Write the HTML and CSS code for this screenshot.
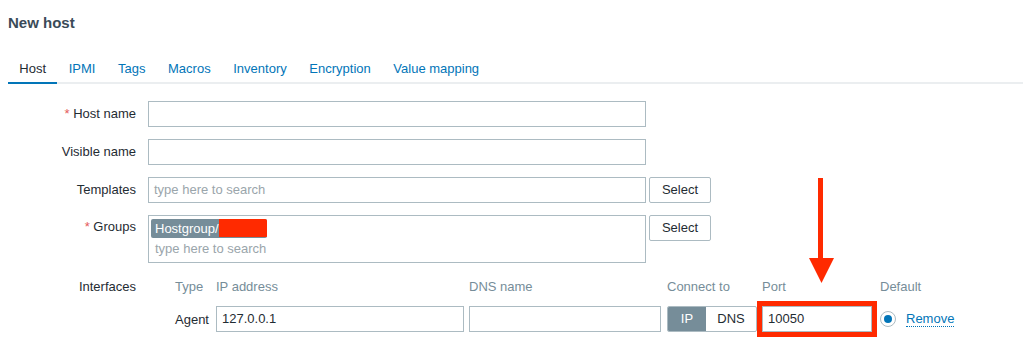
FILE: index.html
```html
<!DOCTYPE html>
<html>
<head>
<meta charset="utf-8">
<link rel="stylesheet" href="styles.css">
</head>
<body>
<div class="page">
  <h1 class="title">New host</h1>
  <ul class="tabs">
    <li class="tab active">Host</li>
    <li class="tab">IPMI</li>
    <li class="tab">Tags</li>
    <li class="tab">Macros</li>
    <li class="tab">Inventory</li>
    <li class="tab">Encryption</li>
    <li class="tab">Value mapping</li>
  </ul>
  <div class="form">
    <div class="label"><span class="req">*</span> Host name</div>
    <div class="field"><div class="input wide"></div></div>

    <div class="label">Visible name</div>
    <div class="field"><div class="input wide"></div></div>

    <div class="label">Templates</div>
    <div class="field"><div class="input wide placeholder">type here to search</div><div class="btn">Select</div></div>

    <div class="label label-top"><span class="req">*</span> Groups</div>
    <div class="field field-top">
      <div class="multi">
        <span class="tag">Hostgroup/<span class="redact"></span></span>
        <div class="placeholder ph-line">type here to search</div>
      </div>
      <div class="btn">Select</div>
    </div>

    <div class="label label-iface">Interfaces</div>
    <div class="iface">
      <div class="hdr">Type</div>
      <div class="hdr">IP address</div>
      <div class="hdr">DNS name</div>
      <div class="hdr">Connect to</div>
      <div class="hdr">Port</div>
      <div class="hdr">Default</div>

      <div class="cell">Agent</div>
      <div class="cell"><div class="input ip">127.0.0.1</div></div>
      <div class="cell"><div class="input dns"></div></div>
      <div class="cell">
        <div class="toggle"><span class="seg seg-on">IP</span><span class="seg">DNS</span></div>
      </div>
      <div class="cell"><div class="input port highlight">10050</div></div>
      <div class="cell">
        <span class="radio"><span class="dot"></span></span>
        <span class="link">Remove</span>
      </div>
    </div>
  </div>
  <svg class="arrow" width="30" height="108" viewBox="0 0 30 108">
    <rect x="12" y="1" width="5" height="82" fill="#ff2a00"/>
    <polygon points="3,81 28,81 15.5,106" fill="#ff2a00"/>
  </svg>
</div>
</body>
</html>
```

FILE: styles.css
```css
* { box-sizing: border-box; }
html, body { margin: 0; padding: 0; background: #ffffff; }
body {
  font-family: "Liberation Sans", Arial, sans-serif;
  font-size: 13px;
  color: #1f2c33;
}
.page {
  position: relative;
  width: 1031px;
  height: 343px;
  padding: 0 8px;
  overflow: hidden;
}
.title {
  margin: 0;
  padding-top: 14px;
  font-size: 15px;
  line-height: 18px;
  font-weight: bold;
  color: #3a4b58;
}
.tabs {
  list-style: none;
  margin: 21px 0 0 0;
  padding: 0;
  display: flex;
  border-bottom: 2px solid #ebeef0;
}
.tab {
  padding: 8px 11.3px 5px;
  line-height: 16px;
  color: #0275b8;
  border-bottom: 2px solid transparent;
  margin-bottom: -2px;
}
.tab.active {
  color: #1f2c33;
  border-bottom-color: #0275b8;
}
.form {
  margin-top: 17px;
  display: grid;
  grid-template-columns: 128px 1fr;
  column-gap: 12px;
  row-gap: 12px;
}
.label {
  text-align: right;
  line-height: 26px;
  white-space: nowrap;
}
.label-top { line-height: 24px; }
.label-iface { line-height: 16px; padding-top: 4px; }
.req { color: #e45959; }
.field {
  display: flex;
  align-items: flex-start;
}
.input {
  height: 26px;
  border: 1px solid #acbbc2;
  background: #fff;
  padding: 0 5px;
  line-height: 24px;
  white-space: nowrap;
}
.wide { width: 498px; }
.placeholder { color: #9aa5ab; }
.btn {
  margin-left: 3px;
  width: 62px;
  height: 26px;
  border: 1px solid #acbbc2;
  border-radius: 2px;
  background: #fff;
  text-align: center;
  line-height: 24px;
  color: #1f2c33;
}
.multi {
  width: 498px;
  height: 48px;
  border: 1px solid #acbbc2;
  padding: 3px 2px 0;
}
.tag {
  display: inline-flex;
  align-items: flex-start;
  height: 19px;
  line-height: 19px;
  padding-left: 4px;
  background: #768d99;
  color: #fff;
  border-radius: 2px;
  overflow: hidden;
}
.redact {
  display: inline-block;
  width: 48px;
  height: 18px;
  background: #ff2a00;
}
.ph-line {
  margin-top: 3px;
  padding-left: 4px;
  line-height: 16px;
}
.iface {
  margin-left: 27px;
  display: grid;
  grid-template-columns: 41px 253px 198px 95px 118px auto;
  row-gap: 11px;
  padding-top: 4px;
}
.hdr {
  color: #768d99;
  line-height: 16px;
  white-space: nowrap;
}
.cell {
  height: 26px;
  display: flex;
  align-items: center;
  white-space: nowrap;
}
.ip { width: 248px; }
.dns { width: 192px; }
.port { width: 110px; }
.highlight {
  outline: 5px solid #ff2a00;
}
.toggle {
  display: flex;
  width: 90px;
  height: 26px;
  border: 1px solid #acbbc2;
  border-radius: 2px;
  overflow: hidden;
}
.seg {
  flex: 1 1 auto;
  text-align: center;
  line-height: 24px;
  color: #1f2c33;
}
.seg-on {
  flex: 0 0 38px;
  background: #768d99;
  color: #fff;
}
.radio {
  width: 16px;
  height: 16px;
  border: 1px solid #acbbc2;
  border-radius: 50%;
  display: flex;
  align-items: center;
  justify-content: center;
  margin-right: 10px;
}
.dot {
  width: 8px;
  height: 8px;
  border-radius: 50%;
  background: #0275b8;
}
.link {
  color: #0275b8;
  line-height: 15px;
  border-bottom: 1px dotted #0275b8;
}
.arrow {
  position: absolute;
  left: 806px;
  top: 177px;
}
```
